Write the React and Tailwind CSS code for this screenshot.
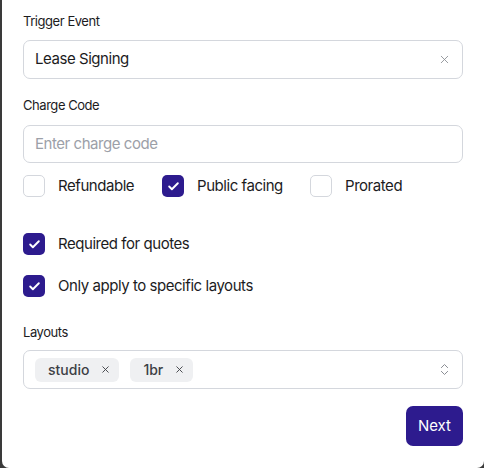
import { X, ChevronsUpDown, Check } from "lucide-react";

const Box = ({ checked }) =>
  checked ? (
    <span className="flex h-[22px] w-[22px] shrink-0 items-center justify-center rounded-[5px] bg-[#2d1b8e]">
      <Check className="h-[13px] w-[13px] text-white" strokeWidth={3.5} />
    </span>
  ) : (
    <span className="h-[22px] w-[22px] shrink-0 rounded-[5px] border border-[#d4d7dd] bg-white" />
  );

const CheckRow = ({ checked, label, className = "" }) => (
  <label className={`flex h-[22px] items-center gap-[13px] ${className}`}>
    <Box checked={checked} />
    <span className="text-[15px] leading-[22px] tracking-[-0.45px] text-[#1c1c1e]">{label}</span>
  </label>
);

const Chip = ({ label }) => (
  <span className="flex h-6 items-center gap-[11px] rounded-md bg-[#eff0f2] pl-[13px] pr-[8px] text-[14px] font-medium text-[#3d3f45]">
    {label}
    <X className="h-[11px] w-[11px] text-[#3d3f45]" strokeWidth={2} />
  </span>
);

export default function App() {
  return (
    <div
      className="h-[468px] w-[484px] bg-[#3a3a3a] pl-[2px]"
      style={{ fontFamily: "Inter, 'Noto Sans', sans-serif" }}
    >
      <div className="flex h-full flex-col rounded-b-[7px] bg-white px-[21px] pt-[11px]">
        <div className="h-5 text-[13px] leading-5 tracking-[-0.45px] text-[#1c1c1e]">Trigger Event</div>
        <div className="mt-[9px] flex h-[39px] items-center justify-between rounded-[7px] border border-[#d4d7dd] pl-[11px] pr-[11px]">
          <span className="text-[15px] tracking-[-0.45px] text-[#1c1c1e]">Lease Signing</span>
          <X className="h-[13px] w-[13px] text-[#8a8d93]" strokeWidth={1.6} />
        </div>

        <div className="mt-[16px] h-5 text-[13px] leading-5 tracking-[-0.45px] text-[#1c1c1e]">Charge Code</div>
        <div className="mt-[10px] flex h-[38px] items-center rounded-[7px] border border-[#d4d7dd] px-[11px]">
          <span className="text-[15px] tracking-[-0.45px] text-[#9ca0a8]">Enter charge code</span>
        </div>

        <div className="mt-[12px] flex items-center">
          <CheckRow label="Refundable" className="w-[139px]" />
          <CheckRow checked label="Public facing" className="w-[148px]" />
          <CheckRow label="Prorated" />
        </div>

        <CheckRow checked label="Required for quotes" className="mt-[36px]" />
        <CheckRow checked label="Only apply to specific layouts" className="mt-[20px]" />

        <div className="mt-[25px] h-5 text-[13px] leading-5 tracking-[-0.45px] text-[#1c1c1e]">Layouts</div>
        <div className="mt-[8px] flex h-[39px] items-center justify-between rounded-[7px] border border-[#d4d7dd] pl-[11px] pr-[10px]">
          <div className="flex items-center gap-[11px]">
            <Chip label="studio" />
            <Chip label="1br" />
          </div>
          <ChevronsUpDown className="h-[15px] w-[15px] text-[#8a8d93]" strokeWidth={1.6} />
        </div>

        <div className="mt-[17px] flex justify-end">
          <button className="h-10 rounded-[7px] bg-[#2d1b8e] px-[12px] text-[15px] text-white">
            Next
          </button>
        </div>
      </div>
    </div>
  );
}
